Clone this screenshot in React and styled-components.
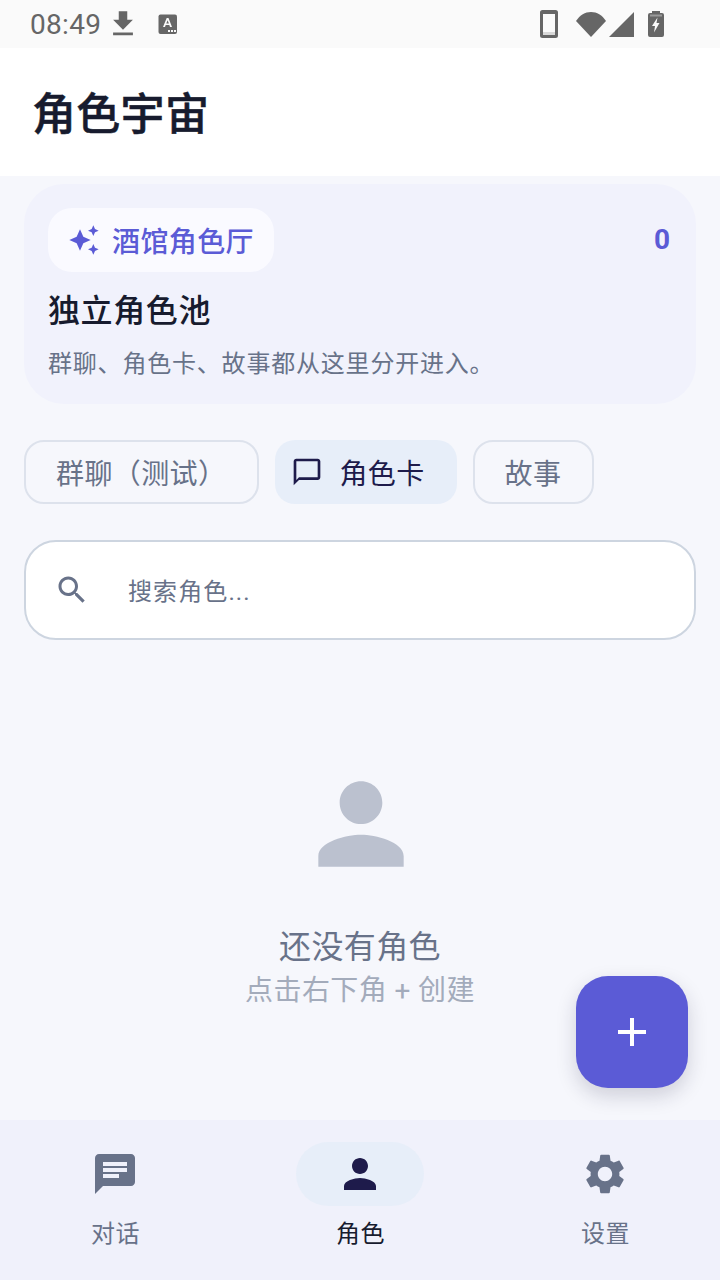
import React from 'react'
import styled, { createGlobalStyle } from 'styled-components'

const GlobalStyle = createGlobalStyle`
  html, body { margin: 0; padding: 0; }
  body { font-family: Roboto, "Noto Sans CJK SC", sans-serif; background: #f6f7fc; }
`

const ICONS = {
  chat: 'M20 2H4c-1.1 0-1.99.9-1.99 2L2 22l4-4h14c1.1 0 2-.9 2-2V4c0-1.1-.9-2-2-2zM6 9h12v2H6V9zm8 5H6v-2h8v2zm4-6H6V6h12v2z',
  person: 'M12 12c2.21 0 4-1.79 4-4s-1.79-4-4-4-4 1.79-4 4 1.79 4 4 4zm0 2c-2.67 0-8 1.34-8 4v2h16v-2c0-2.66-5.33-4-8-4z',
  settings: 'M19.14 12.94c.04-.3.06-.61.06-.94 0-.32-.02-.64-.07-.94l2.03-1.58c.18-.14.23-.41.12-.61l-1.92-3.32c-.12-.22-.37-.29-.59-.22l-2.39.96c-.5-.38-1.03-.7-1.62-.94l-.36-2.54c-.04-.24-.24-.41-.48-.41h-3.84c-.24 0-.43.17-.47.41l-.36 2.54c-.59.24-1.13.57-1.62.94l-2.39-.96c-.22-.08-.47 0-.59.22L2.74 8.87c-.12.21-.08.47.12.61l2.03 1.58c-.05.3-.09.63-.09.94s.02.64.07.94l-2.03 1.58c-.18.14-.23.41-.12.61l1.92 3.32c.12.22.37.29.59.22l2.39-.96c.5.38 1.03.7 1.62.94l.36 2.54c.05.24.24.41.48.41h3.84c.24 0 .44-.17.47-.41l.36-2.54c.59-.24 1.13-.56 1.62-.94l2.39.96c.22.08.47 0 .59-.22l1.92-3.32c.12-.22.07-.47-.12-.61l-2.01-1.58zM12 15.6c-1.98 0-3.6-1.62-3.6-3.6s1.62-3.6 3.6-3.6 3.6 1.62 3.6 3.6-1.62 3.6-3.6 3.6z',
  bubble: 'M20 2H4c-1.1 0-2 .9-2 2v18l4-4h14c1.1 0 2-.9 2-2V4c0-1.1-.9-2-2-2zm0 14H6l-2 2V4h16v12z',
  search: 'M15.5 14h-.79l-.28-.27C15.41 12.59 16 11.11 16 9.5 16 5.91 13.09 3 9.5 3S3 5.91 3 9.5 5.91 16 9.5 16c1.61 0 3.09-.59 4.23-1.57l.27.28v.79l5 4.99L20.49 19l-4.99-5zm-6 0C7.01 14 5 11.99 5 9.5S7.01 5 9.5 5 14 7.01 14 9.5 11.99 14 9.5 14z',
  sparkle: 'M19 9l1.25-2.75L23 5l-2.75-1.25L19 1l-1.25 2.75L15 5l2.75 1.25L19 9zm-7.5.5L9 4 6.5 9.5 1 12l5.5 2.5L9 20l2.5-5.5L17 12l-5.5-2.5zM19 15l-1.25 2.75L15 19l2.75 1.25L19 23l1.25-2.75L23 19l-2.75-1.25L19 15z',
  add: 'M19 13h-6v6h-2v-6H5v-2h6V5h2v6h6v2z',
  download: 'M19 9h-4V3H9v6H5l7 7 7-7zM5 18v2h14v-2H5z',
}

const Icon = ({ name, size, color }) => (
  <svg width={size} height={size} viewBox="0 0 24 24" fill={color} style={{ display: 'block', flexShrink: 0 }}>
    <path d={ICONS[name]} />
  </svg>
)

const TextBadgeIcon = () => (
  <svg width="20" height="20" viewBox="0 0 20 20" style={{ display: 'block' }}>
    <rect x="0.500" y="0.500" width="18.500" height="19.500" rx="2" fill="#666" />
    <path d="M5 13 8.700 4h1.800L14 13h-2l-.7-2H7.700L7 13zM8.300 9.500h2.600L9.600 6.200z" fill="#fafafa" />
    <rect x="10" y="16" width="2" height="2" fill="#fafafa" />
    <rect x="13" y="16" width="2" height="2" fill="#fafafa" />
    <rect x="16" y="16" width="2" height="2" fill="#fafafa" />
  </svg>
)

const PhoneIcon = () => (
  <svg width="18" height="28" viewBox="0 0 18 28" style={{ display: 'block' }}>
    <path fillRule="evenodd" d="M2.500 0h13A2.500 2.500 0 0 1 18 2.500v23a2.500 2.500 0 0 1-2.500 2.500h-13A2.500 2.500 0 0 1 0 25.500v-23A2.500 2.500 0 0 1 2.500 0zM3 4v18h12V4z" fill="#666" />
    <rect x="3" y="22" width="12" height="3" fill="#d8d8d8" />
  </svg>
)

const WifiIcon = () => (
  <svg width="30" height="26" viewBox="0 0 30 26" style={{ display: 'block' }}>
    <path d="M0 10C4 4 9 1 15 1s11 3 15 9L15 26z" fill="#666" />
  </svg>
)

const SignalIcon = () => (
  <svg width="25" height="25" viewBox="0 0 25 25" style={{ display: 'block' }}>
    <path d="M25 0v25H0z" fill="#666" />
  </svg>
)

const BatteryIcon = () => (
  <svg width="16" height="26" viewBox="0 0 16 26" style={{ display: 'block' }}>
    <path d="M4 2V0h8v2h2a2 2 0 0 1 2 2v20a2 2 0 0 1-2 2H2a2 2 0 0 1-2-2V4a2 2 0 0 1 2-2z" fill="#666" />
    <path d="M9.500 6.500 4 15h3l-1 6.500L11.500 12H8.500z" fill="#fafafa" />
    <rect x="2" y="3.500" width="12" height="2" fill="#9a9a9a" />
  </svg>
)

const Page = styled.div`
  width: 720px;
  height: 1280px;
  display: flex;
  flex-direction: column;
  background: #f6f7fc;
  overflow: hidden;
`

const StatusBar = styled.div`
  height: 48px;
  flex-shrink: 0;
  display: flex;
  align-items: center;
  justify-content: space-between;
  padding: 0 56px 0 30px;
  background: #fafafa;
`

const StatusGroup = styled.div`
  display: flex;
  align-items: center;
`

const Clock = styled.span`
  font-family: Roboto, sans-serif;
  font-size: 28px;
  letter-spacing: 0.3px;
  color: #666;
  margin-right: 5px;
`

const StatusSlot = styled.div`
  margin-left: ${(p) => p.$gap || 0}px;
`

const Header = styled.header`
  height: 128px;
  flex-shrink: 0;
  display: flex;
  align-items: center;
  padding: 0 0 2px 32px;
  box-sizing: border-box;
  background: #fff;
`

const Title = styled.h1`
  margin: 0;
  font-size: 44px;
  font-weight: 500;
  letter-spacing: 0.3px;
  -webkit-text-stroke: 0.5px #171b2e;
  color: #171b2e;
`

const Main = styled.main`
  flex: 1;
  position: relative;
  display: flex;
  flex-direction: column;
  padding: 8px 24px 0;
`

const Hero = styled.section`
  height: 220px;
  box-sizing: border-box;
  border-radius: 40px;
  background: #f1f2fc;
  padding: 24px 26px 0 24px;
`

const HeroTop = styled.div`
  display: flex;
  align-items: center;
  justify-content: space-between;
`

const Chip = styled.div`
  height: 64px;
  display: flex;
  align-items: center;
  gap: 12px;
  padding: 0 20px;
  border-radius: 24px;
  background: #fafaff;
  font-size: 28px;
  font-weight: 500;
  letter-spacing: 0.4px;
  color: #5b5bd6;
`

const Count = styled.span`
  padding-bottom: 2px;
  font-size: 28px;
  font-weight: 700;
  color: #5b5bd6;
`

const HeroTitle = styled.div`
  margin-top: 15px;
  font-size: 32px;
  line-height: 48px;
  font-weight: 500;
  letter-spacing: 0.6px;
  color: #171b2e;
`

const HeroText = styled.div`
  margin-top: 12px;
  font-size: 24px;
  line-height: 34px;
  letter-spacing: 0.8px;
  color: #687289;
`

const Tabs = styled.div`
  display: flex;
  gap: 16px;
  margin-top: 36px;
`

const Tab = styled.div`
  height: 64px;
  box-sizing: border-box;
  display: flex;
  align-items: center;
  gap: 16px;
  padding: 0 ${(p) => (p.$active ? '32px' : '31px')} 0 ${(p) => (p.$active ? '16px' : '30px')};
  border-radius: 20px;
  border: ${(p) => (p.$active ? 'none' : '2px solid #dde2ec')};
  background: ${(p) => (p.$active ? '#e7eef9' : 'transparent')};
  font-size: 28px;
  letter-spacing: 0.4px;
  color: ${(p) => (p.$active ? '#1e1b4b' : '#687289')};
`

const SearchBox = styled.div`
  height: 100px;
  box-sizing: border-box;
  margin-top: 36px;
  display: flex;
  align-items: center;
  gap: 38px;
  padding-left: 28px;
  border: 2px solid #cdd5e0;
  border-radius: 32px;
  background: #fff;
`

const Placeholder = styled.span`
  font-size: 24px;
  line-height: 32px;
  letter-spacing: 1.1px;
  color: #687289;
  padding-top: 3px;
`

const Empty = styled.div`
  margin-top: 120px;
  display: flex;
  flex-direction: column;
  align-items: center;
`

const EmptyIcon = styled.div`
  margin-left: 2px;
  margin-bottom: 35px;
`

const EmptyTitle = styled.div`
  font-size: 32px;
  line-height: 48px;
  letter-spacing: 0.4px;
  color: #687289;
`

const EmptyHint = styled.div`
  font-size: 28px;
  line-height: 40px;
  letter-spacing: 0.4px;
  color: #a3abbb;
`

const Fab = styled.button`
  position: absolute;
  right: 32px;
  bottom: 32px;
  width: 112px;
  height: 112px;
  display: flex;
  align-items: center;
  justify-content: center;
  border: none;
  padding: 0;
  border-radius: 32px;
  background: #5b5bd6;
  box-shadow: 0 8px 20px rgba(30, 30, 60, 0.18);
`

const Nav = styled.nav`
  height: 160px;
  flex-shrink: 0;
  display: grid;
  grid-template-columns: 230px 260px 230px;
  background: #f0f1fb;
`

const NavItem = styled.div`
  display: flex;
  flex-direction: column;
  align-items: center;
  padding-top: 22px;
`

const NavPill = styled.div`
  width: 128px;
  height: 64px;
  display: flex;
  align-items: center;
  justify-content: center;
  border-radius: 32px;
  background: ${(p) => (p.$active ? '#e7eef9' : 'transparent')};
`

const NavLabel = styled.span`
  margin-top: 8px;
  margin-left: 1px;
  font-size: 24px;
  line-height: 40px;
  letter-spacing: 0.4px;
  color: ${(p) => (p.$active ? '#171b2e' : '#687289')};
`

const App = () => {
  return (
    <Page>
      <GlobalStyle />
      <StatusBar>
        <StatusGroup>
          <Clock>08:49</Clock>
          <Icon name="download" size={34} color="#666" />
          <StatusSlot $gap={18}>
            <TextBadgeIcon />
          </StatusSlot>
        </StatusGroup>
        <StatusGroup>
          <PhoneIcon />
          <StatusSlot $gap={18}>
            <WifiIcon />
          </StatusSlot>
          <StatusSlot $gap={3}>
            <SignalIcon />
          </StatusSlot>
          <StatusSlot $gap={14}>
            <BatteryIcon />
          </StatusSlot>
        </StatusGroup>
      </StatusBar>
      <Header>
        <Title>角色宇宙</Title>
      </Header>
      <Main>
        <Hero>
          <HeroTop>
            <Chip>
              <Icon name="sparkle" size={32} color="#5b5bd6" />
              酒馆角色厅
            </Chip>
            <Count>0</Count>
          </HeroTop>
          <HeroTitle>独立角色池</HeroTitle>
          <HeroText>群聊、角色卡、故事都从这里分开进入。</HeroText>
        </Hero>
        <Tabs>
          <Tab>群聊（测试）</Tab>
          <Tab $active>
            <Icon name="bubble" size={32} color="#1e1b4b" />
            角色卡
          </Tab>
          <Tab>故事</Tab>
        </Tabs>
        <SearchBox>
          <Icon name="search" size={36} color="#687289" />
          <Placeholder>搜索角色...</Placeholder>
        </SearchBox>
        <Empty>
          <EmptyIcon>
            <Icon name="person" size={128} color="#bbc1cf" />
          </EmptyIcon>
          <EmptyTitle>还没有角色</EmptyTitle>
          <EmptyHint>点击右下角 + 创建</EmptyHint>
        </Empty>
        <Fab>
          <Icon name="add" size={48} color="#fff" />
        </Fab>
      </Main>
      <Nav>
        <NavItem>
          <NavPill>
            <Icon name="chat" size={48} color="#687289" />
          </NavPill>
          <NavLabel>对话</NavLabel>
        </NavItem>
        <NavItem>
          <NavPill $active>
            <Icon name="person" size={48} color="#1e1b4b" />
          </NavPill>
          <NavLabel $active>角色</NavLabel>
        </NavItem>
        <NavItem>
          <NavPill>
            <Icon name="settings" size={48} color="#687289" />
          </NavPill>
          <NavLabel>设置</NavLabel>
        </NavItem>
      </Nav>
    </Page>
  )
}

export default App
